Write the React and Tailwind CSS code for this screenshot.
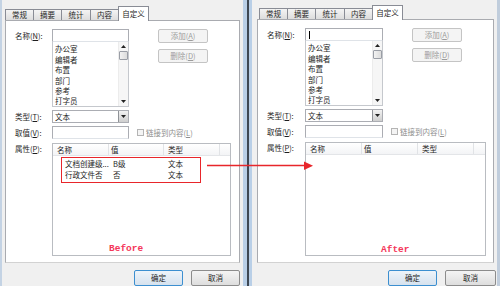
import React from "react";

const U = ({ children }) => <span className="underline underline-offset-[1px]">{children}</span>;

function Tab({ label, w, active }) {
  if (active) {
    return (
      <div className={`${w} h-[15px] -mb-px -ml-px relative z-10 bg-white border border-b-0 border-[#898c95] flex items-center justify-center`}>
        {label}
      </div>
    );
  }
  return (
    <div className={`${w} h-[11px] -ml-px first:ml-0 bg-linear-to-b from-[#f4f4f4] to-[#dddddd] border border-b-0 border-[#898c95] flex items-center justify-center`}>
      {label}
    </div>
  );
}

function Triangle({ down = true }) {
  return (
    <svg width="5" height="3" viewBox="0 0 5 3">
      {down ? <polygon points="0,0 5,0 2.5,3" fill="#222" /> : <polygon points="0,3 5,3 2.5,0" fill="#222" />}
    </svg>
  );
}

function Dialog({ cfg }) {
  const items = ["办公室", "编辑者", "布置", "部门", "参考", "打字员"];
  return (
    <div className={`${cfg.root} shrink-0 flex flex-col`}>
      <div className={`flex items-end h-[14px] ${cfg.tabsMl}`}>
        <Tab label="常规" w="w-[29px]" />
        <Tab label="摘要" w="w-[29px]" />
        <Tab label="统计" w="w-[30px]" />
        <Tab label="内容" w="w-[29px]" />
        <Tab label="自定义" w="w-[31px]" active />
      </div>
      <div className={`${cfg.panel} bg-white border border-[#a9abb0] border-b-[#d2d2d2] pt-[8px] pl-[9px] flex flex-col`}>
        <div className="flex">
          <div className={`${cfg.labelW} h-[13px] flex items-center`}>
            名称(<U>N</U>):
          </div>
          <div className={`${cfg.inputW} flex flex-col`}>
            <div className="h-[13px] border border-[#abadb3] border-b-[#dfe3e8] bg-white flex items-center pl-[3px]">
              {cfg.cursor && <div className="w-px h-[8px] bg-black" />}
            </div>
            <div className="h-[65px] border border-[#c5c8cd] border-t-0 bg-white flex overflow-hidden">
              <div className="flex-1 flex flex-col pt-[2px] pl-[2px]">
                {items.map((t) => (
                  <div key={t} className="h-[10.4px] shrink-0 flex items-center">{t}</div>
                ))}
              </div>
              <div className="w-[10px] bg-[#f6f6f6] border-l border-[#ececec] flex flex-col items-center">
                <div className="h-[9px] flex items-center justify-center"><Triangle down={false} /></div>
                <div className="w-[9px] h-[9px] border border-[#9a9ea6] rounded-[1px] bg-linear-to-r from-[#f2f2f2] to-[#dcdcdc]" />
                <div className="flex-1" />
                <div className="h-[9px] flex items-center justify-center"><Triangle /></div>
              </div>
            </div>
          </div>
          <div className={`${cfg.btnMl} flex flex-col gap-[6px]`}>
            <div className={`${cfg.btnW} h-[14px] border border-[#c4c4c4] rounded-[2px] bg-[#f4f4f4] text-[#9c9c9c] flex items-center justify-center`}>
              添加(<U>A</U>)
            </div>
            <div className={`${cfg.btnW} h-[14px] border border-[#c4c4c4] rounded-[2px] bg-[#f4f4f4] text-[#9c9c9c] flex items-center justify-center`}>
              删除(<U>D</U>)
            </div>
          </div>
        </div>
        <div className="flex mt-[3px]">
          <div className={`${cfg.labelW} h-[13px] flex items-center`}>
            类型(<U>T</U>):
          </div>
          <div className={`${cfg.inputW} h-[13px] border border-[#abadb3] bg-white flex`}>
            <div className="flex-1 flex items-center pl-[2px]">文本</div>
            <div className="w-[10px] border-l border-[#8f9297] bg-linear-to-b from-[#f2f2f2] to-[#cfcfcf] flex items-center justify-center">
              <Triangle />
            </div>
          </div>
        </div>
        <div className="flex mt-[3px] items-center">
          <div className={`${cfg.labelW} h-[13px] flex items-center`}>
            取值(<U>V</U>):
          </div>
          <div className={`${cfg.inputW} h-[13px] border border-[#abadb3] border-b-[#dfe3e8] bg-white`} />
          <div className="ml-[8px] w-[7px] h-[7px] border border-[#b4b4b4] bg-[#f4f4f4]" />
          <div className="ml-[2px] text-[#8e8e8e]">
            链接到内容(<U>L</U>)
          </div>
        </div>
        <div className="flex mt-[4px]">
          <div className={`${cfg.labelW} h-[12px] flex items-center`}>
            属性(<U>P</U>):
          </div>
          <div className={`${cfg.lv} relative border border-[#b9bcc1] bg-white flex flex-col`}>
            <div className="h-[12px] flex border-b border-[#e3e5e8] bg-linear-to-b from-white to-[#f3f4f6]">
              <div className={`${cfg.c1} border-r border-[#e1e3e6] flex items-center pl-[4px]`}>名称</div>
              <div className={`${cfg.c2} border-r border-[#e1e3e6] flex items-center pl-[2px]`}>值</div>
              <div className={`${cfg.c3} border-r border-[#e1e3e6] flex items-center pl-[4px]`}>类型</div>
              <div className="flex-1" />
            </div>
            {cfg.rows && (
              <div className="flex flex-col pt-[2px]">
                {[["文档创建级...", "B级", "文本"], ["行政文件否", "否", "文本"]].map((r) => (
                  <div key={r[0]} className="h-[11px] flex items-center">
                    <div className={`${cfg.c1} pl-[12px]`}>{r[0]}</div>
                    <div className={`${cfg.c2} pl-[4px]`}>{r[1]}</div>
                    <div className={`${cfg.c3} pl-[4px]`}>{r[2]}</div>
                  </div>
                ))}
              </div>
            )}
            {cfg.rows && (
              <div className="absolute left-[8px] top-[13px] w-[140px] h-[26px] border-[1.5px] border-[#e8262b]" />
            )}
            <div className={`absolute ${cfg.capPos} font-['Liberation_Mono',monospace] font-bold text-[9.5px] text-[#f4385a] leading-none`}>
              {cfg.caption}
            </div>
          </div>
        </div>
      </div>
      <div className={`flex justify-end mt-[7px] ${cfg.bottomPr} gap-[8px]`}>
        <div className="w-[49px] h-[16px] border border-[#3c8fd0] rounded-[2px] bg-linear-to-b from-[#eef4fa] to-[#d6e2ee] flex items-start justify-center pt-[3px]">
          确定
        </div>
        <div className={`${cfg.cancelW} h-[16px] border border-[#8c8c8c] rounded-[2px] bg-linear-to-b from-[#f4f4f4] to-[#dedede] flex items-start justify-center pt-[3px]`}>
          取消
        </div>
      </div>
    </div>
  );
}

const LEFT = {
  root: "w-[241px] pl-[3px] pt-[6px]",
  tabsMl: "ml-0",
  panel: "w-[235px] h-[246px]",
  labelW: "w-[37px]",
  inputW: "w-[77px]",
  btnMl: "ml-[29px]",
  btnW: "w-[50px]",
  lv: "w-[179px] h-[113px]",
  c1: "w-[56px]",
  c2: "w-[55px]",
  c3: "w-[56px]",
  rows: true,
  caption: "Before",
  capPos: "left-[56px] top-[100px]",
  bottomPr: "pr-[3px]",
  cancelW: "w-[49px]",
  cursor: false,
};

const RIGHT = {
  root: "w-[245px] pl-[5px] pt-[5px]",
  tabsMl: "ml-[2px]",
  panel: "w-[237px] h-[247px]",
  labelW: "w-[38px]",
  inputW: "w-[78px]",
  btnMl: "ml-[29px]",
  btnW: "w-[50px]",
  lv: "w-[181px] h-[114px]",
  c1: "w-[56px]",
  c2: "w-[56px]",
  c3: "w-[56px]",
  rows: false,
  caption: "After",
  capPos: "left-[75px] top-[102px]",
  bottomPr: "pr-[1px]",
  cancelW: "w-[51px]",
  cursor: true,
};

export default function App() {
  return (
    <div className="relative w-[500px] h-[286px] overflow-hidden flex bg-[#f0f0f0] text-[#1e1e1e] font-['Noto_Sans_CJK_SC','Noto_Sans',sans-serif] text-[7.5px] leading-none">
      <div className="w-[2px] shrink-0 bg-[#c4d3e4]" />
      <Dialog cfg={LEFT} />
      <div className="w-[4px] shrink-0 bg-[#b9cfe7]" />
      <div className="w-[2px] shrink-0 bg-[#3e4854]" />
      <div className="w-[3px] shrink-0 bg-[#b9cfe7]" />
      <Dialog cfg={RIGHT} />
      <div className="w-[3px] shrink-0 bg-[#c0cddc]" />
      <svg className="absolute left-0 top-0 pointer-events-none" width="500" height="286" viewBox="0 0 500 286">
        <line x1="207" y1="165.5" x2="306" y2="165.5" stroke="#e8262b" strokeWidth="1.3" />
        <polygon points="304,161.5 313,165.8 304,170" fill="#e8262b" />
      </svg>
    </div>
  );
}
